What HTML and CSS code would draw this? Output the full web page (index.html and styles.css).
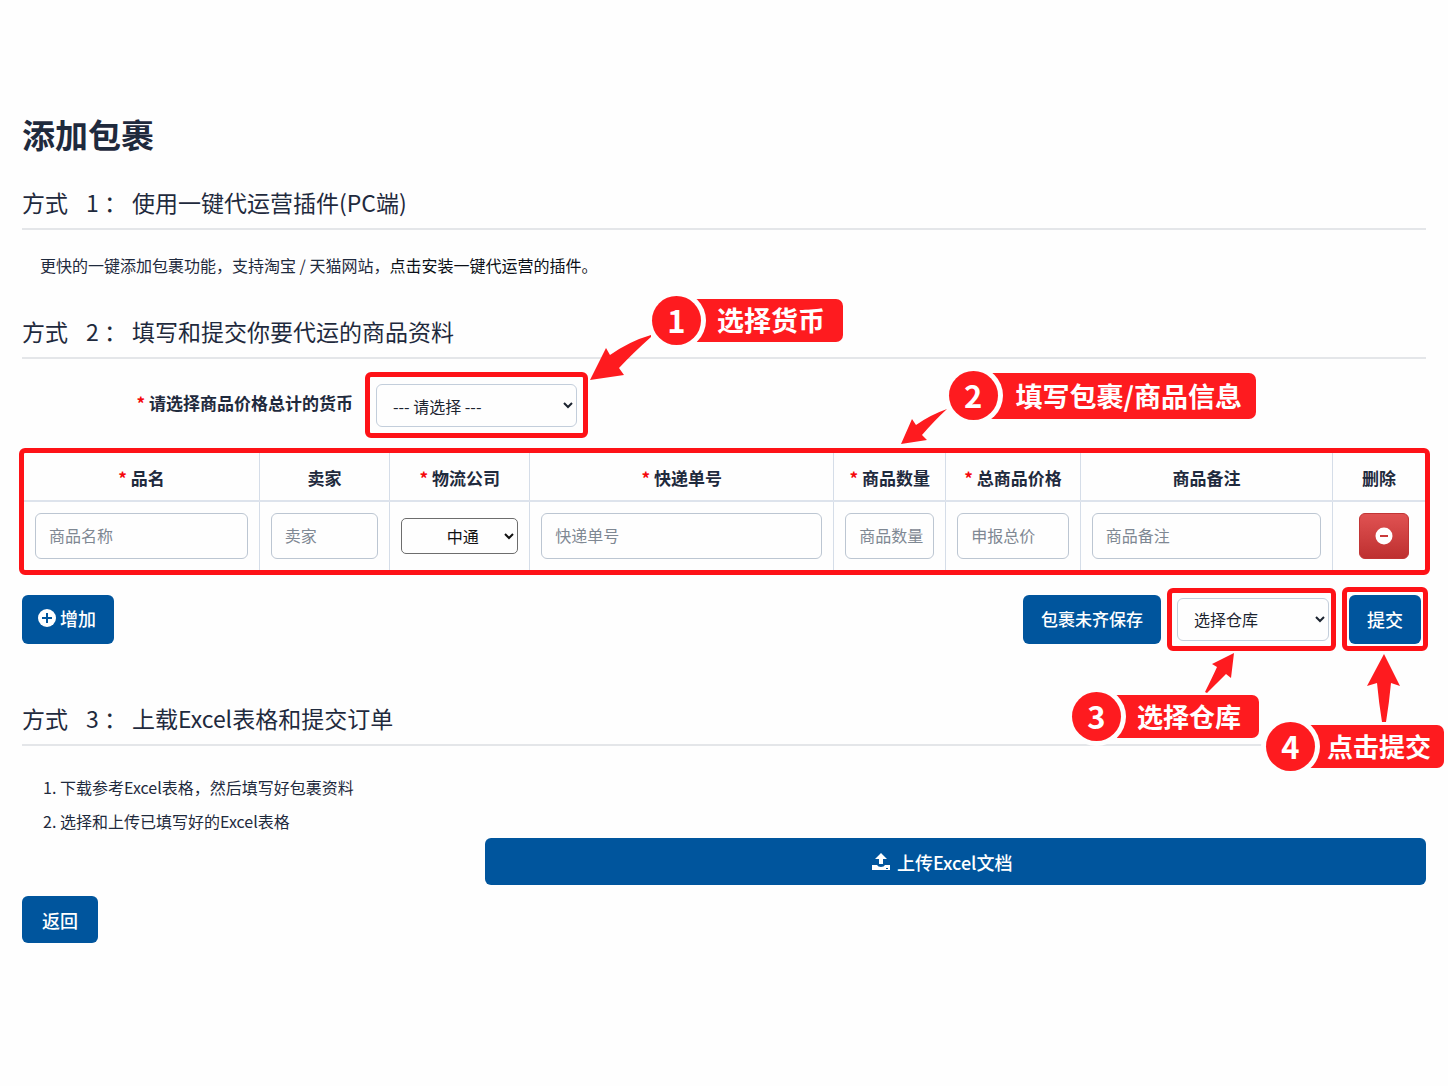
FILE: index.html
```html
<!DOCTYPE html>
<html lang="zh-CN">
<head>
  <meta charset="UTF-8">
  <meta name="viewport" content="width=device-width, initial-scale=1.0">
  <title>添加包裹</title>
  <link rel="stylesheet" href="styles.css">
</head>
<body>
  <main class="page">
    <h1>添加包裹</h1>

    <section>
      <h2>方式<span class="num">1 ：</span>使用一键代运营插件(PC端)</h2>
      <p class="intro">更快的一键添加包裹功能，支持淘宝 / 天猫网站，<a href="#">点击安装一键代运营的插件。</a></p>
    </section>

    <section class="manual">
      <h2>方式<span class="num">2 ：</span>填写和提交你要代运的商品资料</h2>

      <div class="currency-row">
        <label for="currency"><span class="req">*</span> 请选择商品价格总计的货币</label>
        <div class="mark mark-currency">
          <select id="currency" class="select">
            <option>--- 请选择 ---</option>
          </select>
          <svg class="arrow arrow-1" width="62" height="46" viewBox="0 0 62 46"><path d="M0 45 L16 13 L20 20 Q40 6 61 0 L61 2 Q43 18 29 33 L34 40 Z"/></svg>
          <div class="callout callout-1"><span class="dot">1</span><span class="tag">选择货币</span></div>
        </div>
      </div>

      <div class="mark mark-table">
        <table>
          <colgroup>
            <col class="c-name"><col class="c-seller"><col class="c-carrier"><col class="c-track">
            <col class="c-qty"><col class="c-price"><col class="c-note"><col class="c-del">
          </colgroup>
          <thead>
            <tr>
              <th><span class="req">*</span> 品名</th>
              <th>卖家</th>
              <th><span class="req">*</span> 物流公司</th>
              <th><span class="req">*</span> 快递单号</th>
              <th><span class="req">*</span> 商品数量</th>
              <th><span class="req">*</span> 总商品价格</th>
              <th>商品备注</th>
              <th>删除</th>
            </tr>
          </thead>
          <tbody>
            <tr>
              <td><input type="text" placeholder="商品名称" aria-label="品名"></td>
              <td><input type="text" placeholder="卖家" aria-label="卖家"></td>
              <td>
                <select class="carrier" aria-label="物流公司">
                  <option>中通</option>
                </select>
              </td>
              <td><input type="text" placeholder="快递单号" aria-label="快递单号"></td>
              <td><input type="text" placeholder="商品数量" aria-label="商品数量"></td>
              <td><input type="text" placeholder="申报总价" aria-label="总商品价格"></td>
              <td><input type="text" placeholder="商品备注" aria-label="商品备注"></td>
              <td class="del">
                <button type="button" class="btn-del" aria-label="删除">
                  <svg width="18" height="18" viewBox="0 0 18 18"><circle cx="9" cy="9" r="8.5" fill="#fff"/><path d="M5 9h8" stroke="#c93a3a" stroke-width="2"/></svg>
                </button>
              </td>
            </tr>
          </tbody>
        </table>
        <svg class="arrow arrow-2" width="47" height="36" viewBox="0 0 47 36"><path d="M0 35 L11 10 L15 16 Q29 6 46 0 Q34 11 21 26 L26 31 Z"/></svg>
        <div class="callout callout-2"><span class="dot">2</span><span class="tag">填写包裹/商品信息</span></div>
      </div>

      <div class="actions">
        <button type="button" class="btn btn-add">
          <svg width="18" height="18" viewBox="0 0 18 18"><circle cx="9" cy="9" r="9" fill="#fff"/><path d="M4 9h10M9 4v10" stroke="#00559d" stroke-width="2"/></svg>
          增加
        </button>
        <div class="actions-right">
          <button type="button" class="btn btn-save">包裹未齐保存</button>
          <div class="mark mark-store">
            <select class="select" aria-label="选择仓库">
              <option>选择仓库</option>
            </select>
            <svg class="arrow arrow-3" width="30" height="40" viewBox="0 0 30 40"><path d="M29 0 L7 11 L12 14 Q7 25 0 39 L2 40 Q12 30 21 21 L26 25 Z"/></svg>
            <div class="callout callout-3"><span class="dot">3</span><span class="tag">选择仓库</span></div>
          </div>
          <div class="mark mark-submit">
            <button type="button" class="btn">提交</button>
            <svg class="arrow arrow-4" width="34" height="68" viewBox="0 0 34 68"><path d="M17 0 L0 32 L10 29 Q12 50 15 68 L19 68 Q22 50 24 29 L33 32 Z"/></svg>
            <div class="callout callout-4"><span class="dot">4</span><span class="tag">点击提交</span></div>
          </div>
        </div>
      </div>
    </section>

    <section class="excel">
      <h2>方式<span class="num">3 ：</span>上载Excel表格和提交订单</h2>
      <ol>
        <li>下载参考Excel表格，然后填写好包裹资料</li>
        <li>选择和上传已填写好的Excel表格</li>
      </ol>
      <button type="button" class="btn btn-upload">
        <svg width="18" height="18" viewBox="0 0 18 18" fill="#fff"><path d="M9 0 L15 6 H11 V11 H7 V6 H3 Z"/><path fill-rule="evenodd" d="M0 12 H5 Q6 14 9 14 Q12 14 13 12 H18 V17 H0 Z M14 15 V16 H16 V15 Z"/></svg>
        上传Excel文档
      </button>
    </section>

    <button type="button" class="btn btn-back">返回</button>
  </main>
</body>
</html>
```
FILE: styles.css
```css
* {
  box-sizing: border-box;
}
body {
  margin: 0;
  background: #fefefe;
  color: #1f2a3d;
  font-family: "Noto Sans CJK SC", sans-serif;
  font-size: 16px;
  line-height: 24px;
}
.page {
  padding: 112px 22px 40px;
}
h1 {
  margin: 0 0 31px;
  font-size: 33px;
  line-height: 44px;
  font-weight: 700;
}
h2 {
  margin: 0;
  padding-bottom: 11px;
  border-bottom: 2px solid #e4e6e9;
  font-size: 23px;
  line-height: 30px;
  font-weight: 400;
}
.num {
  margin: 0 5px 0 18px;
}
.intro {
  margin: 23px 18px 0;
}
.intro a {
  color: #0b0f16;
  text-decoration: none;
}
.manual {
  margin-top: 39px;
}
.req {
  color: #f5070c;
}

/* red highlight frames */
.mark {
  position: relative;
  border: 5px solid #fe1217;
  border-radius: 6px;
}

/* form controls */
input,
select,
button {
  font-family: inherit;
  font-size: 16px;
}
input {
  display: block;
  width: 100%;
  height: 46px;
  padding: 0 4px 2px 13px;
  border: 1px solid #bcc6d2;
  border-radius: 6px;
  background: #fefefe;
  color: #1f2a3d;
}
input::placeholder {
  color: #7f8893;
}
.select {
  display: block;
  width: 100%;
  height: 43px;
  padding: 0 12px;
  border: 1px solid #c3cedb;
  border-radius: 6px;
  background: #fefefe;
  color: #1c2430;
}
.currency-row {
  display: flex;
  align-items: center;
  gap: 6px;
  margin-top: 13px;
}
.currency-row label {
  width: 24%;
  padding: 0 6px 4px 0;
  text-align: right;
  font-size: 17px;
  font-weight: 700;
}
.mark-currency {
  width: 223px;
  padding: 7px 6px 6px;
}

/* parcel table */
.mark-table {
  margin: 10px -4px 0 -3px;
}
table {
  width: 100%;
  border-collapse: collapse;
  table-layout: fixed;
}
.c-name { width: 16.8%; }
.c-seller { width: 9.3%; }
.c-carrier { width: 10%; }
.c-track { width: 21.7%; }
.c-qty { width: 8%; }
.c-price { width: 9.6%; }
.c-note { width: 18%; }
.c-del { width: 6.6%; }
th {
  height: 48px;
  padding: 3px 0 0;
  border-bottom: 2px solid #dde3ec;
  font-size: 17px;
  font-weight: 700;
  white-space: nowrap;
}
td {
  height: 69px;
  padding: 0 11px;
}
th + th,
td + td {
  border-left: 1px solid #d5dde8;
}
.carrier {
  display: block;
  width: 100%;
  height: 36px;
  padding-left: 18px;
  border: 1px solid #6d6d6d;
  border-radius: 5px;
  background: #fefefe;
  color: #111;
  text-align: center;
}
td.del {
  padding: 0 16px 0 0;
}
.btn-del {
  display: flex;
  align-items: center;
  justify-content: center;
  width: 50px;
  height: 46px;
  margin-left: auto;
  padding: 0;
  border: 1px solid #c23535;
  border-radius: 6px;
  background: linear-gradient(#e05252, #be3030);
  cursor: pointer;
}

/* buttons */
.btn {
  display: flex;
  align-items: center;
  justify-content: center;
  gap: 4px;
  height: 49px;
  padding: 0 15px 2px;
  border: none;
  border-radius: 6px;
  background: #00559d;
  color: #fff;
  font-size: 18px;
  font-weight: 500;
  white-space: nowrap;
  cursor: pointer;
}
.btn:hover {
  background: #004a8a;
}
.actions {
  display: flex;
  align-items: center;
  justify-content: space-between;
  margin: 12px -2px 0 0;
}
.actions-right {
  display: flex;
  align-items: center;
  gap: 6px;
}
.btn-add {
  padding: 0 18px 2px 16px;
}
.btn-save {
  padding: 0 18px 2px;
  font-size: 17px;
}
.mark-store {
  width: 169px;
  padding: 5px 2px 5px 5px;
}
.mark-submit {
  padding: 3px 2px 2px;
}
.mark-submit .btn {
  padding: 0 18px 2px;
}

/* excel upload */
.excel {
  margin-top: 52px;
}
ol {
  margin: 24px 0 0;
  padding-left: 38px;
  line-height: 34px;
}
.btn-upload {
  width: 67%;
  height: 47px;
  margin-left: auto;
  padding: 0 42px 0 15px;
  gap: 7px;
}
.btn-back {
  height: 47px;
  margin-top: 11px;
  padding: 0 20px;
}

/* numbered callouts laid over the form */
.callout {
  position: absolute;
  z-index: 2;
  display: flex;
  align-items: center;
  color: #fff;
  font-size: 27px;
  font-weight: 700;
  white-space: nowrap;
}
.dot {
  position: relative;
  z-index: 1;
  width: 49px;
  height: 49px;
  border-radius: 50%;
  background: #fe1b1f;
  box-shadow: 0 0 0 5px #fefefe;
  font-size: 31px;
  line-height: 48px;
  text-align: center;
}
.tag {
  height: 43px;
  margin-left: -12px;
  padding: 0 18px 0 28px;
  border-radius: 7px;
  background: #fe1b1f;
  line-height: 42px;
}
.callout-1 {
  top: -81px;
  right: -260px;
}
.callout-2 {
  top: -82px;
  right: 169px;
}
.callout-2 .tag {
  height: 46px;
  padding: 0 14px 0 30px;
  line-height: 45px;
}
.callout-3 {
  top: 99px;
  right: 72px;
  font-size: 26px;
}
.callout-4 {
  top: 130px;
  right: -21px;
  font-size: 26px;
}
.callout-4 .tag {
  padding: 0 13px 0 24px;
}
.arrow {
  position: absolute;
  z-index: 1;
  fill: #fe1b1f;
}
.arrow-1 {
  top: -42px;
  right: -69px;
}
.arrow-2 {
  top: -44px;
  right: 477px;
}
.arrow-3 {
  top: 60px;
  right: 96px;
}
.arrow-4 {
  top: 62px;
  right: 22px;
}
```
